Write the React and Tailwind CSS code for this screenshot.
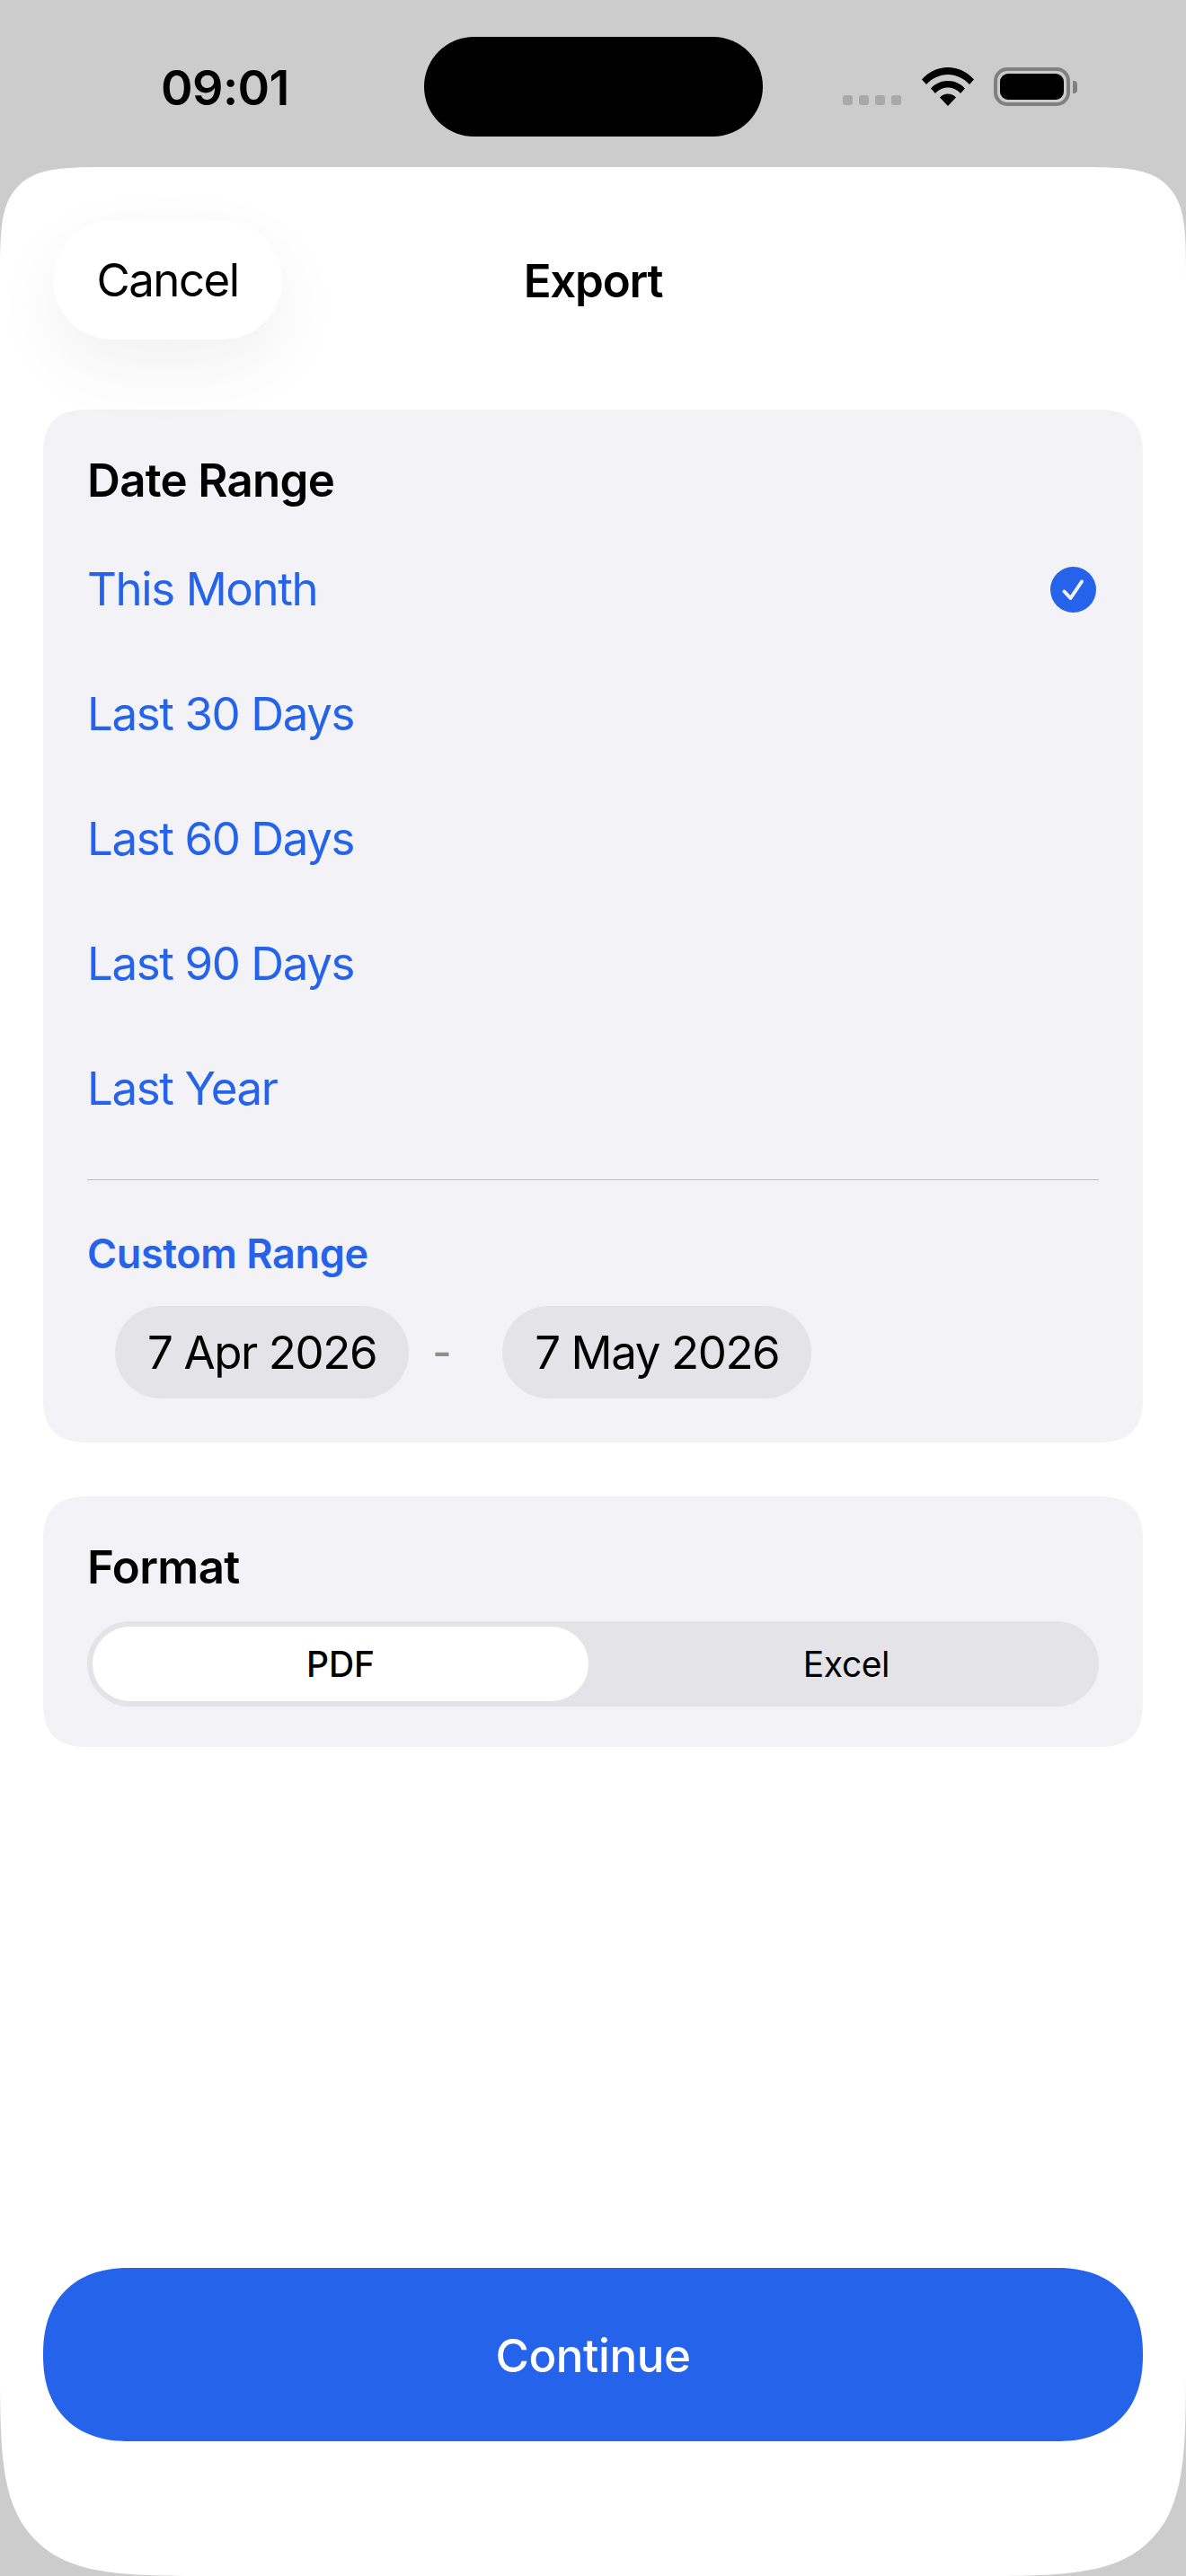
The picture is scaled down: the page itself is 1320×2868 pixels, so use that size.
import React from 'react'

const font = { fontFamily: 'Inter, "Noto Sans", sans-serif' }

const ranges = ['This Month', 'Last 30 Days', 'Last 60 Days', 'Last 90 Days', 'Last Year']

const StatusIcons = () => (
    <div className="flex items-end">
        <div className="flex gap-[7px] mb-[1px]">
            <div className="w-[11px] h-[11px] rounded-[3px] bg-[#a9a9a9]"></div>
            <div className="w-[11px] h-[11px] rounded-[3px] bg-[#a9a9a9]"></div>
            <div className="w-[11px] h-[11px] rounded-[3px] bg-[#a9a9a9]"></div>
            <div className="w-[11px] h-[11px] rounded-[3px] bg-[#a9a9a9]"></div>
        </div>
        <svg className="ml-[23px]" width="58" height="43" viewBox="0 0 58 43">
            <path d="M0 13.5C7.5 5 18 0 29 0s21.500 5 29 13.500l-5 5.500C46.500 12 38 8 29 8S11.500 12 5 19z" fill="#000" />
            <path d="M10 23.500C15 18 21.500 15 29 15s14 3 19 8.500l-5 5.500c-3.500-4-8.500-6.500-14-6.500S18.500 25 15 29z" fill="#000" />
            <path d="M20 33.500c2.300-2.500 5.500-4 9-4s6.700 1.500 9 4L29 43z" fill="#000" />
        </svg>
        <div className="ml-[22px] flex items-center">
            <div className="w-[85px] h-[43px] rounded-[15px] border-[4px] border-[#808080] p-[3px]">
                <div className="w-full h-full rounded-[9px] bg-black"></div>
            </div>
            <div className="ml-[3px] w-[5px] h-[14px] rounded-r-[4px] bg-[#808080]"></div>
        </div>
    </div>
)

const App = () => {
    return (
        <div className="w-[1320px] h-[2868px] bg-[#cccccc] flex flex-col text-black overflow-hidden" style={font}>
            {/* status bar */}
            <div className="h-[186px] shrink-0 flex items-start">
                <div className="w-[472px] pt-[70px] pl-[179px] text-[54px] leading-[56px] font-semibold tracking-[-0.6px]">09:01</div>
                <div className="mt-[41px] w-[377px] h-[111px] rounded-[56px] bg-black"></div>
                <div className="pt-[75px] pl-[89px]">
                    <StatusIcons />
                </div>
            </div>

            {/* sheet */}
            <div className="flex-1 bg-white rounded-t-[130px] rounded-b-[250px] [corner-shape:superellipse(2)] flex flex-col px-[48px]">
                <div className="relative h-[270px] shrink-0 pt-[60px]">
                    <button className="w-[255px] h-[132px] ml-[11px] rounded-[66px] bg-white text-[51px] tracking-[-1.5px] shadow-[0_30px_80px_rgba(0,0,0,0.06)]">Cancel</button>
                    <div className="absolute left-0 right-0 top-[61px] h-[132px] flex items-center justify-center text-[51px] font-semibold tracking-[-1.2px]">Export</div>
                </div>

                <div className="bg-[#f2f2f7] rounded-[54px] [corner-shape:superellipse(1.5)] px-[49px] pt-[49px] h-[1150px]">
                    <div className="text-[51px] leading-[60px] font-semibold tracking-[-0.7px]">Date Range</div>
                    <div className="mt-[61px] flex flex-col gap-[79px]">
                        {ranges.map((label, i) => (
                            <div key={label} className="h-[60px] flex items-center justify-between text-[51px] text-[#2563eb] tracking-[-1.4px]">
                                <span>{label}</span>
                                {i === 0 && (
                                    <svg className="mr-[3px]" width="51" height="51" viewBox="0 0 51 51">
                                        <circle cx="25.500" cy="25.500" r="25.500" fill="#2563eb" />
                                        <path d="M15.500 27.500l7 7.500L35 16.500" fill="none" stroke="#f2f2f7" strokeWidth="4" strokeLinecap="round" strokeLinejoin="round" />
                                    </svg>
                                )}
                            </div>
                        ))}
                    </div>
                    <div className="mt-[71px] h-[1px] bg-[#bcbcc0]"></div>
                    <div className="mt-[55px] text-[45px] leading-[54px] font-semibold text-[#2563eb] tracking-[-0.4px]">Custom Range</div>
                    <div className="mt-[31px] ml-[31px] flex items-center">
                        <div className="h-[103px] px-[36px] pt-[2px] rounded-[52px] bg-[#e3e3e8] flex items-center text-[51px] tracking-[-1.4px]">7 Apr 2026</div>
                        <div className="w-[104px] pl-[26px] text-left text-[46px] font-medium text-[#8e8e93]">-</div>
                        <div className="h-[103px] px-[36px] pt-[2px] rounded-[52px] bg-[#e3e3e8] flex items-center text-[51px] tracking-[-1.4px]">7 May 2026</div>
                    </div>
                </div>

                <div className="mt-[60px] bg-[#f2f2f7] rounded-[54px] [corner-shape:superellipse(1.5)] px-[49px] pt-[49px] h-[279px]">
                    <div className="text-[51px] leading-[60px] font-semibold tracking-[-0.6px]">Format</div>
                    <div className="mt-[30px] h-[95px] rounded-[48px] bg-[#e3e3e8] flex p-[6px] text-[39px]">
                        <div className="w-[552px] pt-[1px] rounded-[42px] bg-white flex items-center justify-center font-medium">PDF</div>
                        <div className="flex-1 pl-[12px] pt-[1px] flex items-center justify-center tracking-[-0.4px]">Excel</div>
                    </div>
                </div>

                <div className="flex-1"></div>
                <button className="mb-[150px] h-[193px] pt-[3px] shrink-0 rounded-[96px] [corner-shape:superellipse(1.2)] bg-[#2563eb] text-white text-[51px] font-medium tracking-[-0.4px]">Continue</button>
            </div>
        </div>
    )
}

export default App
